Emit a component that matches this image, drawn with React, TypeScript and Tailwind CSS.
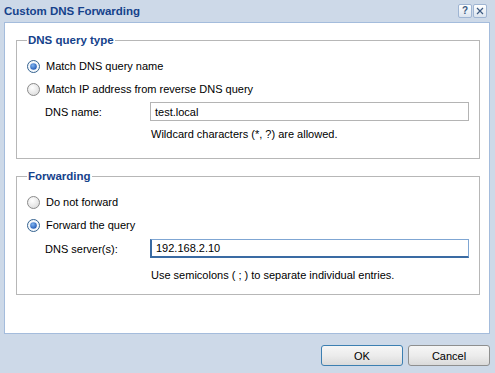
import React from 'react';

const Radio: React.FC<{ checked?: boolean }> = ({ checked }) => (
  <svg width="13" height="13" viewBox="0 0 13 13" className="shrink-0">
    <defs>
      <radialGradient id="rOff" cx="40%" cy="35%" r="70%">
        <stop offset="0%" stopColor="#ffffff" />
        <stop offset="100%" stopColor="#dcdcdc" />
      </radialGradient>
      <radialGradient id="rDot" cx="40%" cy="35%" r="70%">
        <stop offset="0%" stopColor="#7fb4f0" />
        <stop offset="100%" stopColor="#1d55b3" />
      </radialGradient>
    </defs>
    <circle cx="6.5" cy="6.5" r="6" fill={checked ? '#f4f8fc' : 'url(#rOff)'} stroke={checked ? '#34628f' : '#8b8b8b'} />
    {checked && <circle cx="6.5" cy="6.5" r="3.3" fill="url(#rDot)" />}
  </svg>
);

const RadioRow: React.FC<{ checked?: boolean; label: string; className?: string }> = ({ checked, label, className }) => (
  <div className={`flex items-center h-[16px] gap-[6px] ${className ?? ''}`}>
    <Radio checked={checked} />
    <span>{label}</span>
  </div>
);

const TitleButton: React.FC<{ children: React.ReactNode }> = ({ children }) => (
  <div className="w-[14px] h-[14px] flex items-center justify-center rounded-[2px] border border-[#9fb5d3] bg-gradient-to-b from-white to-[#dbe4ef] text-[#3c5a82] text-[10px] font-bold leading-none">
    {children}
  </div>
);

export default function App() {
  return (
    <div className="w-[495px] h-[373px] bg-[#cdd9e8] font-['Liberation_Sans',Arial,sans-serif] text-[11px] text-black leading-[14px]">
      <div className="h-[22px] flex items-center justify-between pl-[4px] pr-[8px]">
        <span className="text-[#15428b] font-bold text-[11.5px]">Custom DNS Forwarding</span>
        <div className="flex gap-[1px]">
          <TitleButton>?</TitleButton>
          <TitleButton>
            <svg width="8" height="8" viewBox="0 0 8 8">
              <path d="M1 1 L7 7 M7 1 L1 7" stroke="#3c5a82" strokeWidth="1.2" />
            </svg>
          </TitleButton>
        </div>
      </div>

      <div className="ml-[4px] w-[486px] h-[312px] bg-white border border-[#a4bcdc] pt-[10px] pl-[11px] pr-[10px]">
        <fieldset className="border border-[#b7b7b7] pl-[10px] pr-[10px] pb-[17px]">
          <legend className="px-[1px] text-[#15428b] font-bold text-[11.5px] leading-[14px]">DNS query type</legend>
          <RadioRow checked label="Match DNS query name" className="mt-[11px]" />
          <RadioRow label="Match IP address from reverse DNS query" className="mt-[7px]" />
          <div className="flex items-center mt-[5px] pl-[18px]">
            <span className="w-[105px]">DNS name:</span>
            <div className="w-[319px] h-[19px] border border-[#b4b4b4] flex items-center pl-[4px]">test.local</div>
          </div>
          <div className="mt-[6px] pl-[124px]">Wildcard characters (*, ?) are allowed.</div>
        </fieldset>

        <fieldset className="mt-[10px] border border-[#b7b7b7] pl-[10px] pr-[10px] pb-[12px]">
          <legend className="px-[1px] text-[#15428b] font-bold text-[11.5px] leading-[14px]">Forwarding</legend>
          <RadioRow label="Do not forward" className="mt-[11px]" />
          <RadioRow checked label="Forward the query" className="mt-[7px]" />
          <div className="flex items-center mt-[6px] pl-[18px]">
            <span className="w-[105px]">DNS server(s):</span>
            <div className="w-[319px] h-[19px] border border-[#7fa6d3] border-l-2 border-b-2 border-l-[#3a6ba3] border-b-[#3a6ba3] flex items-center pl-[4px]">192.168.2.10</div>
          </div>
          <div className="mt-[10px] pl-[124px]">Use semicolons ( ; ) to separate individual entries.</div>
        </fieldset>
      </div>

      <div className="flex justify-end gap-[5px] pr-[5px] mt-[11px]">
        <button className="w-[82px] h-[21px] rounded-[3px] border border-[#3c7fb1] bg-gradient-to-b from-[#f6f6f6] via-[#ececec] to-[#dadada] text-[11px]">OK</button>
        <button className="w-[82px] h-[21px] rounded-[3px] border border-[#8e8f8f] bg-gradient-to-b from-[#f6f6f6] via-[#ececec] to-[#dadada] text-[11px]">Cancel</button>
      </div>
    </div>
  );
}
